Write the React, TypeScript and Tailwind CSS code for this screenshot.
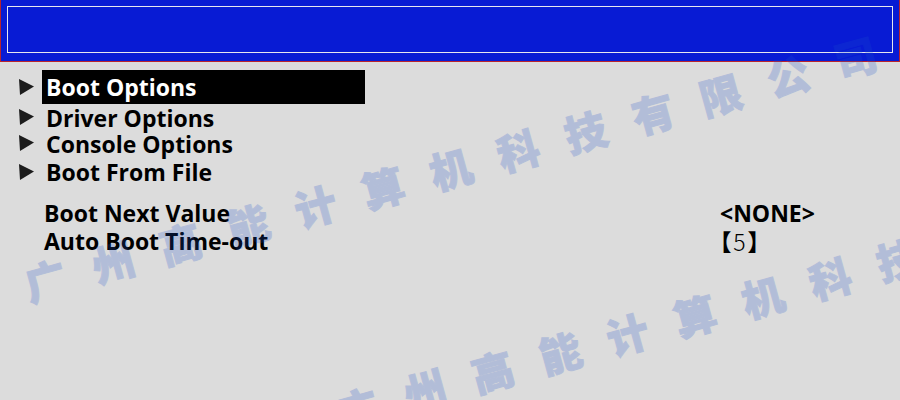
import { clsx } from 'clsx';

const menu = [
  { label: 'Boot Options', height: 'h-[34px]', active: true },
  { label: 'Driver Options', height: 'h-[26px]' },
  { label: 'Console Options', height: 'h-[26px]' },
  { label: 'Boot From File', height: 'h-8' },
];

const company = '广州高能计算机科技有限公司';

const Arrow = () => (
  <svg width="15" height="16" viewBox="0 0 15 16" className="shrink-0" aria-hidden="true">
    <path d="M0 0 L15 7.5 L1 16 Z" fill="#1c1c1c" />
  </svg>
);

const Watermark = ({ className }: { className: string }) => (
  <div
    aria-hidden="true"
    className={clsx(
      'absolute flex gap-7 origin-left -rotate-[15.4deg] whitespace-nowrap text-[42px] leading-[42px] font-black',
      'text-[#1c50cc] opacity-[0.21] [-webkit-text-stroke:1px_#1c50cc]',
      'font-["Noto_Sans_CJK_SC",sans-serif]',
      className
    )}
  >
    {[...company].map((char, i) => (
      <span key={i}>{char}</span>
    ))}
  </div>
);

export default function App() {
  return (
    <div className='relative min-h-screen overflow-hidden bg-[#dcdcdc] text-[23px] leading-7 font-bold text-black font-["Open_Sans",sans-serif]'>
      <header className="border border-t-0 border-[#b8232f] bg-[#081bd4] px-1.5 pt-1.5 pb-2">
        <div className="h-[47px] border border-[#e6e6ee]" />
      </header>

      <main className="pt-2 pl-[19px]">
        <nav>
          {menu.map((item) => (
            <div key={item.label} className={clsx('flex items-center gap-2', item.height)}>
              <Arrow />
              <button
                type="button"
                className={clsx(
                  'h-full w-[323px] px-1 text-left whitespace-nowrap',
                  item.active && 'bg-black text-white'
                )}
              >
                {item.label}
              </button>
            </div>
          ))}
        </nav>

        <form className="mt-[11px] grid grid-cols-[1fr_180px] pl-[25px]">
          <label htmlFor="boot-next">Boot Next Value</label>
          <select id="boot-next" className="h-7 appearance-none justify-self-start bg-transparent">
            <option>&lt;NONE&gt;</option>
          </select>

          <label htmlFor="timeout">Auto Boot Time-out</label>
          <div className={'flex font-black font-["Noto_Sans_CJK_SC",sans-serif] [font-feature-settings:"halt"]'}>
            <span>【</span>
            <input
              id="timeout"
              defaultValue="5"
              className="h-7 w-4 bg-transparent text-center font-light"
            />
            <span>】</span>
          </div>
        </form>
      </main>

      {/* company watermark, repeated diagonally */}
      <div className="pointer-events-none absolute inset-0 overflow-hidden">
        <Watermark className="top-[264px] left-[25px]" />
        <Watermark className="top-[392px] left-[337px]" />
      </div>
    </div>
  );
}
